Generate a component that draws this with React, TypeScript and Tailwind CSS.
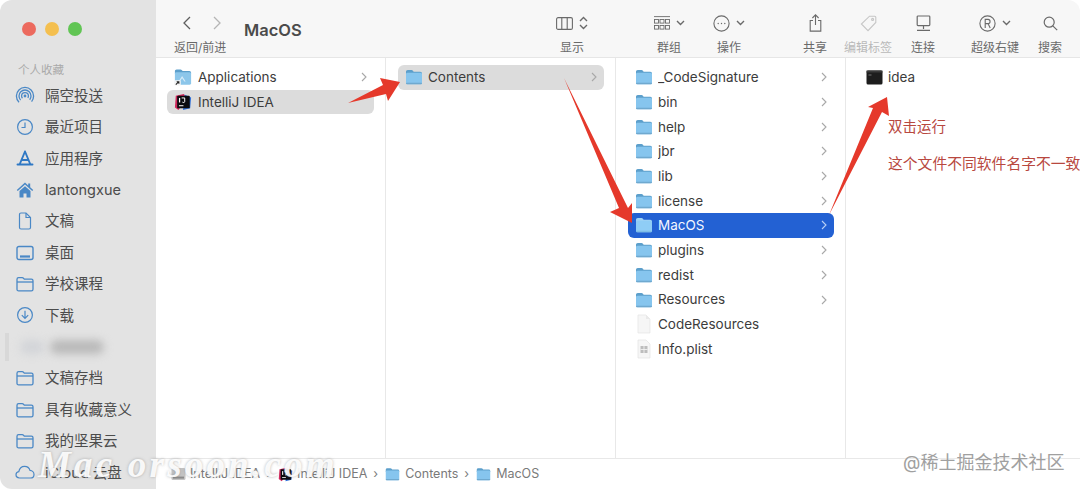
import React from "react";

const FONT = '"Inter", "Noto Sans CJK SC", sans-serif';

function Folder({ dim = false, size = 18 }: { dim?: boolean; size?: number }) {
  return (
    <svg width={size} height={Math.round(size * 0.9)} viewBox="0 0 20 18" className="shrink-0">
      <path d="M1 3.2C1 2 1.8 1.2 3 1.2h4.2c.7 0 1.2.3 1.6.8l.8 1h7.4c1.2 0 2 .8 2 2V6H1z" fill={dim ? "#9fd2f5" : "#5c9fcb"} />
      <rect x="1" y="4.2" width="18" height="13" rx="1.6" fill={dim ? "#8fcdf6" : "#86c5ee"} />
      <rect x="1" y="15.6" width="18" height="1.6" rx="0.8" fill={dim ? "#7fbde6" : "#6fa9cf"} />
    </svg>
  );
}

function AppsFolder() {
  return (
    <svg width="18" height="18" viewBox="0 0 20 20" className="shrink-0">
      <path d="M1 3.5C1 2.4 1.8 1.6 3 1.6h4.2c.7 0 1.2.3 1.6.8l.8 1h7.4c1.2 0 2 .8 2 2V6H1z" fill="#5c9fcb" />
      <rect x="1" y="4.6" width="18" height="14" rx="1.6" fill="#8cc6ea" />
      <path d="M9 9l4 6h-1.5L9 11.5 6.5 15H5z" fill="#d5ebf8" />
      <rect x="0.5" y="13.5" width="7" height="6" rx="1" fill="#f4f4f4" />
      <path d="M2 18.5l3-3M3 15.2h2.4v2.4" stroke="#222" strokeWidth="1.2" fill="none" />
    </svg>
  );
}

function IdeaIcon({ size = 18 }: { size?: number }) {
  return (
    <svg width={size} height={size} viewBox="0 0 20 20" className="shrink-0">
      <path d="M2 3l9-2 3 5-9 13-4-3z" fill="#d0285c" />
      <path d="M12 2l7 3-1 12-8 2z" fill="#2e6fd8" />
      <rect x="3.5" y="3" width="14" height="14" rx="1" fill="#0b0b0f" />
      <rect x="5.5" y="5.5" width="1.4" height="5" fill="#fff" />
      <path d="M8.5 5.5h3.4v4c0 1.2-1.8 1.4-2.6.6" stroke="#fff" strokeWidth="1.1" fill="none" />
      <rect x="5.5" y="13.6" width="5" height="1.1" fill="#fff" />
    </svg>
  );
}

function DocIcon() {
  return (
    <svg width="18" height="20" viewBox="0 0 18 20" className="shrink-0">
      <path d="M3 1h8l4 4v14H3z" fill="#f6f6f6" stroke="#e4e4e4" strokeWidth="0.7" />
      <path d="M11 1v4h4" fill="#e9e9e9" />
    </svg>
  );
}

function PlistIcon() {
  return (
    <svg width="18" height="20" viewBox="0 0 18 20" className="shrink-0">
      <path d="M3 1h8l4 4v14H3z" fill="#f6f6f6" stroke="#e2e2e2" strokeWidth="0.7" />
      <rect x="5.5" y="7" width="7" height="7" fill="#bdbdbd" />
      <path d="M9 7v7M5.5 10.5h7" stroke="#f6f6f6" strokeWidth="0.8" />
    </svg>
  );
}

function TermIcon() {
  return (
    <svg width="17" height="15" viewBox="0 0 17 15" className="shrink-0">
      <rect x="0.5" y="0.5" width="16" height="14" rx="1.5" fill="#1d1d1d" />
      <rect x="0.5" y="0.5" width="16" height="2" fill="#3a3a3a" />
      <path d="M2.5 5h3" stroke="#8a8a8a" strokeWidth="0.8" />
    </svg>
  );
}

function Chevron({ light = false }: { light?: boolean }) {
  return (
    <svg width="6" height="10" viewBox="0 0 6 10" className="ml-auto mr-[7px] shrink-0">
      <path d="M1 1l4 4-4 4" stroke={light ? "#b9d1f5" : "#a8a8a8"} strokeWidth="1.1" fill="none" />
    </svg>
  );
}

function Row({
  icon,
  name,
  arrow = false,
  tone = "none",
  tight = false,
}: {
  icon: React.ReactNode;
  name: string;
  arrow?: boolean;
  tone?: "none" | "gray" | "blue";
  tight?: boolean;
}) {
  const bg = tone === "gray" ? "bg-[#dcdcdc]" : tone === "blue" ? "bg-[#2361d3] text-[#f2f6ff]" : "";
  return (
    <div className={`flex h-[24.7px] items-center rounded-[6px] pl-[7px] text-[13.5px] ${tight ? "gap-[5px]" : "gap-[6px]"} ${bg}`}>
      <span className="flex w-[18px] shrink-0 items-center justify-center">{icon}</span>
      <span className="truncate">{name}</span>
      {arrow && <Chevron light={tone === "blue"} />}
    </div>
  );
}

const B = "#4a88c6";

const SideIcons: Record<string, React.ReactNode> = {
  airdrop: (
    <svg width="20" height="20" viewBox="0 0 20 20" fill="none" stroke={B} strokeWidth="1.3">
      <circle cx="10" cy="10" r="8.6" strokeDasharray="40 14" strokeDashoffset="-20" />
      <circle cx="10" cy="10" r="6" strokeDasharray="28 10" strokeDashoffset="-14" />
      <circle cx="10" cy="10" r="3.4" strokeDasharray="15 6" strokeDashoffset="-8" />
      <circle cx="10" cy="10" r="1.4" fill={B} stroke="none" />
    </svg>
  ),
  clock: (
    <svg width="18" height="18" viewBox="0 0 18 18" fill="none" stroke={B} strokeWidth="1.2">
      <circle cx="9" cy="9" r="7.4" />
      <path d="M9 4.5V9.5H5.5" />
    </svg>
  ),
  apps: (
    <svg width="18" height="18" viewBox="0 0 18 18" fill="none" stroke="#2f78c4" strokeWidth="1.9" strokeLinecap="round">
      <path d="M9 2.5L3.8 15M9 2.5L14.2 15M1.5 15.5h15M5.8 11h6.4" />
    </svg>
  ),
  home: (
    <svg width="18" height="18" viewBox="0 0 18 18" fill={B}>
      <path d="M9 1.5L.8 9l1 1L9 3.5 16.2 10l1-1-3-2.7V2.5h-2v2z" />
      <path d="M3.5 10L9 5.2 14.5 10v6.5h-4v-4h-3v4h-4z" />
    </svg>
  ),
  doc: (
    <svg width="16" height="18" viewBox="0 0 16 18" fill="none" stroke={B} strokeWidth="1.2">
      <path d="M2.5 2.5C2.5 1.6 3 1 4 1h5l4.5 4.5v10c0 .9-.6 1.5-1.5 1.5H4c-1 0-1.5-.6-1.5-1.5z" />
      <path d="M9 1v4.5h4.5" />
    </svg>
  ),
  desktop: (
    <svg width="18" height="16" viewBox="0 0 18 16" fill="none" stroke={B} strokeWidth="1.4">
      <rect x="1" y="1.5" width="16" height="13" rx="2" />
      <path d="M4 11.5h10" strokeWidth="2.2" />
    </svg>
  ),
  folder: (
    <svg width="18" height="16" viewBox="0 0 18 16" fill="none" stroke={B} strokeWidth="1.3">
      <path d="M1 3.2C1 2.2 1.7 1.6 2.6 1.6h3.6c.7 0 1 .2 1.4.7l.7.9h7.1c1 0 1.6.6 1.6 1.6v8.4c0 1-.6 1.6-1.6 1.6H2.6c-1 0-1.6-.6-1.6-1.6z" />
      <path d="M1 6h16" />
    </svg>
  ),
  download: (
    <svg width="18" height="18" viewBox="0 0 18 18" fill="none" stroke={B} strokeWidth="1.2">
      <circle cx="9" cy="9" r="7.4" />
      <path d="M9 4.8v7.4M5.8 9.2L9 12.4l3.2-3.2" />
    </svg>
  ),
  cloud: (
    <svg width="20" height="14" viewBox="0 0 20 14" fill="none" stroke={B} strokeWidth="1.2">
      <path d="M4.5 13C2.5 13 1 11.5 1 9.8c0-1.7 1.2-2.9 2.8-3.1C4.4 3.6 6.8 1.4 9.6 1.4c2.6 0 4.7 1.7 5.4 4 2.2.1 4 1.9 4 4 0 2-1.6 3.6-3.6 3.6z" />
    </svg>
  ),
};

function SideRow({ icon, label }: { icon: string; label: string }) {
  return (
    <div className="flex h-[31.4px] items-center text-[14.5px] text-[#4c4c4c]">
      <span className="flex w-[45px] shrink-0 items-center justify-center pl-[12px] pr-[7px]">{SideIcons[icon]}</span>
      <span className="whitespace-nowrap">{label}</span>
    </div>
  );
}

function Tool({
  label,
  w,
  dim = false,
  children,
  className = "",
}: {
  label: string;
  w: string;
  dim?: boolean;
  children: React.ReactNode;
  className?: string;
}) {
  return (
    <div className={`flex shrink-0 flex-col items-center ${w} ${className}`}>
      <div className="flex h-[20px] items-center gap-[6px]">{children}</div>
      <span className={`mt-[7px] whitespace-nowrap text-[12px] leading-[16px] ${dim ? "text-[#b9b9b9]" : "text-[#6a6a6a]"}`}>{label}</span>
    </div>
  );
}

const IC = "#6a6a6a";
const Down = () => (
  <svg width="9" height="6" viewBox="0 0 9 6" fill="none" stroke={IC} strokeWidth="1.4">
    <path d="M1 1l3.5 3.5L8 1" />
  </svg>
);

const col3 = ["_CodeSignature", "bin", "help", "jbr", "lib", "license"];
const col3b = ["plugins", "redist", "Resources"];

export default function App() {
  return (
    <div className="relative flex h-[489px] w-[1080px] overflow-hidden bg-white text-[#3c3c3c]" style={{ fontFamily: FONT }}>
      <aside className="flex h-full w-[156px] shrink-0 flex-col rounded-l-[12px] bg-[#e3e3e3]">
        <div className="flex gap-[9px] pl-[22px] pt-[22px]">
          <span className="h-[14px] w-[14px] rounded-full bg-[#ec6a5e]" />
          <span className="h-[14px] w-[14px] rounded-full bg-[#f4bf4f]" />
          <span className="h-[14px] w-[14px] rounded-full bg-[#61c554]" />
        </div>
        <div className="mt-[26px] pl-[18px] text-[11.5px] leading-[16px] text-[#a9a9a9]">个人收藏</div>
        <div className="mt-[2px] flex flex-col">
          <SideRow icon="airdrop" label="隔空投送" />
          <SideRow icon="clock" label="最近项目" />
          <SideRow icon="apps" label="应用程序" />
          <SideRow icon="home" label="lantongxue" />
          <SideRow icon="doc" label="文稿" />
          <SideRow icon="desktop" label="桌面" />
          <SideRow icon="folder" label="学校课程" />
          <SideRow icon="download" label="下载" />
          <div className="flex h-[31.4px] items-center pl-[5px]">
            <div className="h-[28px] w-[4px] bg-[#d8d8d8]" />
            <div className="ml-[11px] h-[14px] w-[24px] rounded-full bg-[#d2d4d8] blur-[4px]" />
            <div className="ml-[6px] h-[14px] w-[54px] rounded-full bg-[#b9b9b9] blur-[4px]" />
          </div>
          <SideRow icon="folder" label="文稿存档" />
          <SideRow icon="folder" label="具有收藏意义" />
          <SideRow icon="folder" label="我的坚果云" />
          <SideRow icon="cloud" label="iCloud 云盘" />
        </div>
      </aside>

      <main className="flex h-full min-w-0 flex-1 flex-col">
        <header className="flex h-[58px] shrink-0 items-start rounded-tr-[12px] border-b border-[#e6e6e6] bg-[#f7f7f7] pt-[13px]">
          <div className="w-[74px] shrink-0 pl-[18px]">
            <div className="flex h-[20px] items-center gap-[22px] pl-[9px]">
              <svg width="8" height="14" viewBox="0 0 8 14" fill="none" stroke="#5e5e5e" strokeWidth="1.3"><path d="M7 1L1 7l6 6" /></svg>
              <svg width="8" height="14" viewBox="0 0 8 14" fill="none" stroke="#b5b5b5" strokeWidth="1.3"><path d="M1 1l6 6-6 6" /></svg>
            </div>
            <div className="mt-[7px] whitespace-nowrap text-[12px] leading-[16px] text-[#6a6a6a]">返回/前进</div>
          </div>
          <div className="ml-[14px] w-[298px] shrink-0 pt-[7px] text-[16.5px] font-semibold leading-[20px] text-[#4b4b4b]">MacOS</div>
          <Tool label="显示" w="w-[60px]">
            <svg width="17" height="13" viewBox="0 0 17 13" fill="none" stroke={IC} strokeWidth="1.1">
              <rect x="0.6" y="0.6" width="15.8" height="11.8" rx="1.5" />
              <path d="M5.8 1v11M11.2 1v11" />
            </svg>
            <svg width="9" height="14" viewBox="0 0 9 14" fill="none" stroke={IC} strokeWidth="1.4"><path d="M1 5l3.5-3.5L8 5M1 9l3.5 3.5L8 9" /></svg>
          </Tool>
          <Tool label="群组" w="w-[60px]" className="ml-[37px]">
            <svg width="16" height="15" viewBox="0 0 16 15" fill="none" stroke={IC} strokeWidth="0.9">
              <path d="M0 .6h16" />
              <rect x="0.5" y="3.5" width="4" height="3.6" />
              <rect x="6" y="3.5" width="4" height="3.6" />
              <rect x="11.5" y="3.5" width="4" height="3.6" />
              <rect x="0.5" y="9.5" width="4" height="3.6" />
              <rect x="6" y="9.5" width="4" height="3.6" />
              <rect x="11.5" y="9.5" width="4" height="3.6" />
            </svg>
            <Down />
          </Tool>
          <Tool label="操作" w="w-[60px]">
            <svg width="17" height="17" viewBox="0 0 17 17" fill="none" stroke={IC} strokeWidth="1.1">
              <circle cx="8.5" cy="8.5" r="7.6" />
              <circle cx="5.2" cy="8.5" r="0.7" fill={IC} stroke="none" />
              <circle cx="8.5" cy="8.5" r="0.7" fill={IC} stroke="none" />
              <circle cx="11.8" cy="8.5" r="0.7" fill={IC} stroke="none" />
            </svg>
            <Down />
          </Tool>
          <Tool label="共享" w="w-[40px]" className="ml-[36px]">
            <svg width="13" height="18" viewBox="0 0 13 18" fill="none" stroke={IC} strokeWidth="1.1">
              <path d="M6.5 11V1M3.4 4l3.1-3.1L9.6 4" />
              <path d="M4 6.5H1.2v10.6h10.6V6.5H9" />
            </svg>
          </Tool>
          <Tool label="编辑标签" w="w-[62px]" dim className="ml-[2px]">
            <svg width="17" height="17" viewBox="0 0 17 17" fill="none" stroke="#c6c6c6" strokeWidth="1.1">
              <path d="M9.5 1.2h5.2c.6 0 1.1.5 1.1 1.1v5.2L8 15.6 1.4 9z" />
              <circle cx="12.6" cy="4.4" r="1" />
            </svg>
          </Tool>
          <Tool label="连接" w="w-[40px]" className="ml-[4px]">
            <svg width="15" height="17" viewBox="0 0 15 17" fill="none" stroke={IC} strokeWidth="1.2">
              <rect x="1.2" y="1" width="12.6" height="9.6" rx="0.8" />
              <path d="M7.5 10.6v3.4M1 15.4h13" />
            </svg>
          </Tool>
          <Tool label="超级右键" w="w-[70px]" className="ml-[17px]">
            <svg width="17" height="17" viewBox="0 0 17 17" fill="none" stroke={IC} strokeWidth="1.1">
              <circle cx="8.5" cy="8.5" r="7.6" />
              <path d="M6.2 13V4.4h2.9c2.6 0 2.6 4.2 0 4.2H6.2M9 8.6l2.2 4.4" />
            </svg>
            <Down />
          </Tool>
          <Tool label="搜索" w="w-[40px]">
            <svg width="15" height="15" viewBox="0 0 15 15" fill="none" stroke={IC} strokeWidth="1.2">
              <circle cx="6.2" cy="6.2" r="5" />
              <path d="M9.8 9.8l4.4 4.4" />
            </svg>
          </Tool>
        </header>

        <div className="flex min-h-0 flex-1">
          <section className="w-[230px] shrink-0 border-r border-[#e8e8e8] pl-[11px] pr-[11px] pt-[7px]">
            <Row icon={<AppsFolder />} name="Applications" arrow />
            <Row icon={<IdeaIcon />} name="IntelliJ IDEA" tone="gray" />
          </section>
          <section className="w-[230px] shrink-0 border-r border-[#e8e8e8] pl-[12px] pr-[11px] pt-[7px]">
            <Row icon={<Folder />} name="Contents" arrow tone="gray" tight />
          </section>
          <section className="w-[230px] shrink-0 border-r border-[#e8e8e8] pl-[12px] pr-[11px] pt-[7px]">
            {col3.map((n) => (
              <Row key={n} icon={<Folder />} name={n} arrow tight />
            ))}
            <Row icon={<Folder dim />} name="MacOS" arrow tone="blue" tight />
            {col3b.map((n) => (
              <Row key={n} icon={<Folder />} name={n} arrow tight />
            ))}
            <Row icon={<DocIcon />} name="CodeResources" tight />
            <Row icon={<PlistIcon />} name="Info.plist" tight />
          </section>
          <section className="min-w-0 flex-1 overflow-hidden pl-[20px] pt-[7px]">
            <div className="flex h-[24.7px] items-center gap-[5px] text-[13.5px]">
              <TermIcon />
              <span>idea</span>
            </div>
            <div className="ml-[22px] mt-[26px] whitespace-nowrap text-[14.5px] leading-[22px] text-[#b8483f]">双击运行</div>
            <div className="ml-[22px] mt-[15px] whitespace-nowrap text-[14.8px] leading-[22px] text-[#b8483f]">这个文件不同软件名字不一致</div>
          </section>
        </div>

        <footer className="flex h-[31px] shrink-0 items-center border-t border-[#e8e8e8] bg-white pl-[15px] text-[12.5px] text-[#7a7a7a]">
          <svg width="15" height="14" viewBox="0 0 15 14" className="shrink-0">
            <rect x="0.5" y="1" width="14" height="12" rx="1.5" fill="#c4c4c4" />
            <rect x="2" y="9.6" width="11" height="2" fill="#8a8a8a" />
          </svg>
          <span className="ml-[4px]">IntelliJ IDEA</span>
          <span className="ml-[6px] text-[#8a8a8a]">›</span>
          <span className="ml-[7px]"><IdeaIcon size={15} /></span>
          <span className="ml-[4px]">IntelliJ IDEA</span>
          <span className="ml-[6px]">›</span>
          <span className="ml-[7px]"><Folder size={15} /></span>
          <span className="ml-[5px]">Contents</span>
          <span className="ml-[6px]">›</span>
          <span className="ml-[7px]"><Folder size={15} /></span>
          <span className="ml-[5px]">MacOS</span>
        </footer>
      </main>

      {/* annotation arrows drawn over the window */}
      <svg className="pointer-events-none absolute left-0 top-0" width="1080" height="489" viewBox="0 0 1080 489">
        <g fill="#e5392b">
          <polygon points="348,103 383,85 380,78 400,82 388,101 386,94" />
          <polygon points="564,78 628,208 632,203 632,223 610,212 619,208" />
          <polygon points="829,215 873,108 868,107 887,97 889,116 882,112" />
        </g>
      </svg>

      {/* watermarks */}
      <div
        className="pointer-events-none absolute left-[38px] top-[445px] whitespace-nowrap text-[37px] font-bold italic leading-[40px] tracking-[3.2px] text-white/90"
        style={{ fontFamily: '"Liberation Serif", serif', textShadow: "0 0 3px rgba(120,120,120,.55)" }}
      >
        Mac orsoon.com
      </div>
      <div
        className="pointer-events-none absolute left-[903px] top-[451px] whitespace-nowrap text-[18px] leading-[24px] text-[#a0a0a0]"
        style={{ textShadow: "0 0 2px #fff" }}
      >
        @稀土掘金技术社区
      </div>
    </div>
  );
}
